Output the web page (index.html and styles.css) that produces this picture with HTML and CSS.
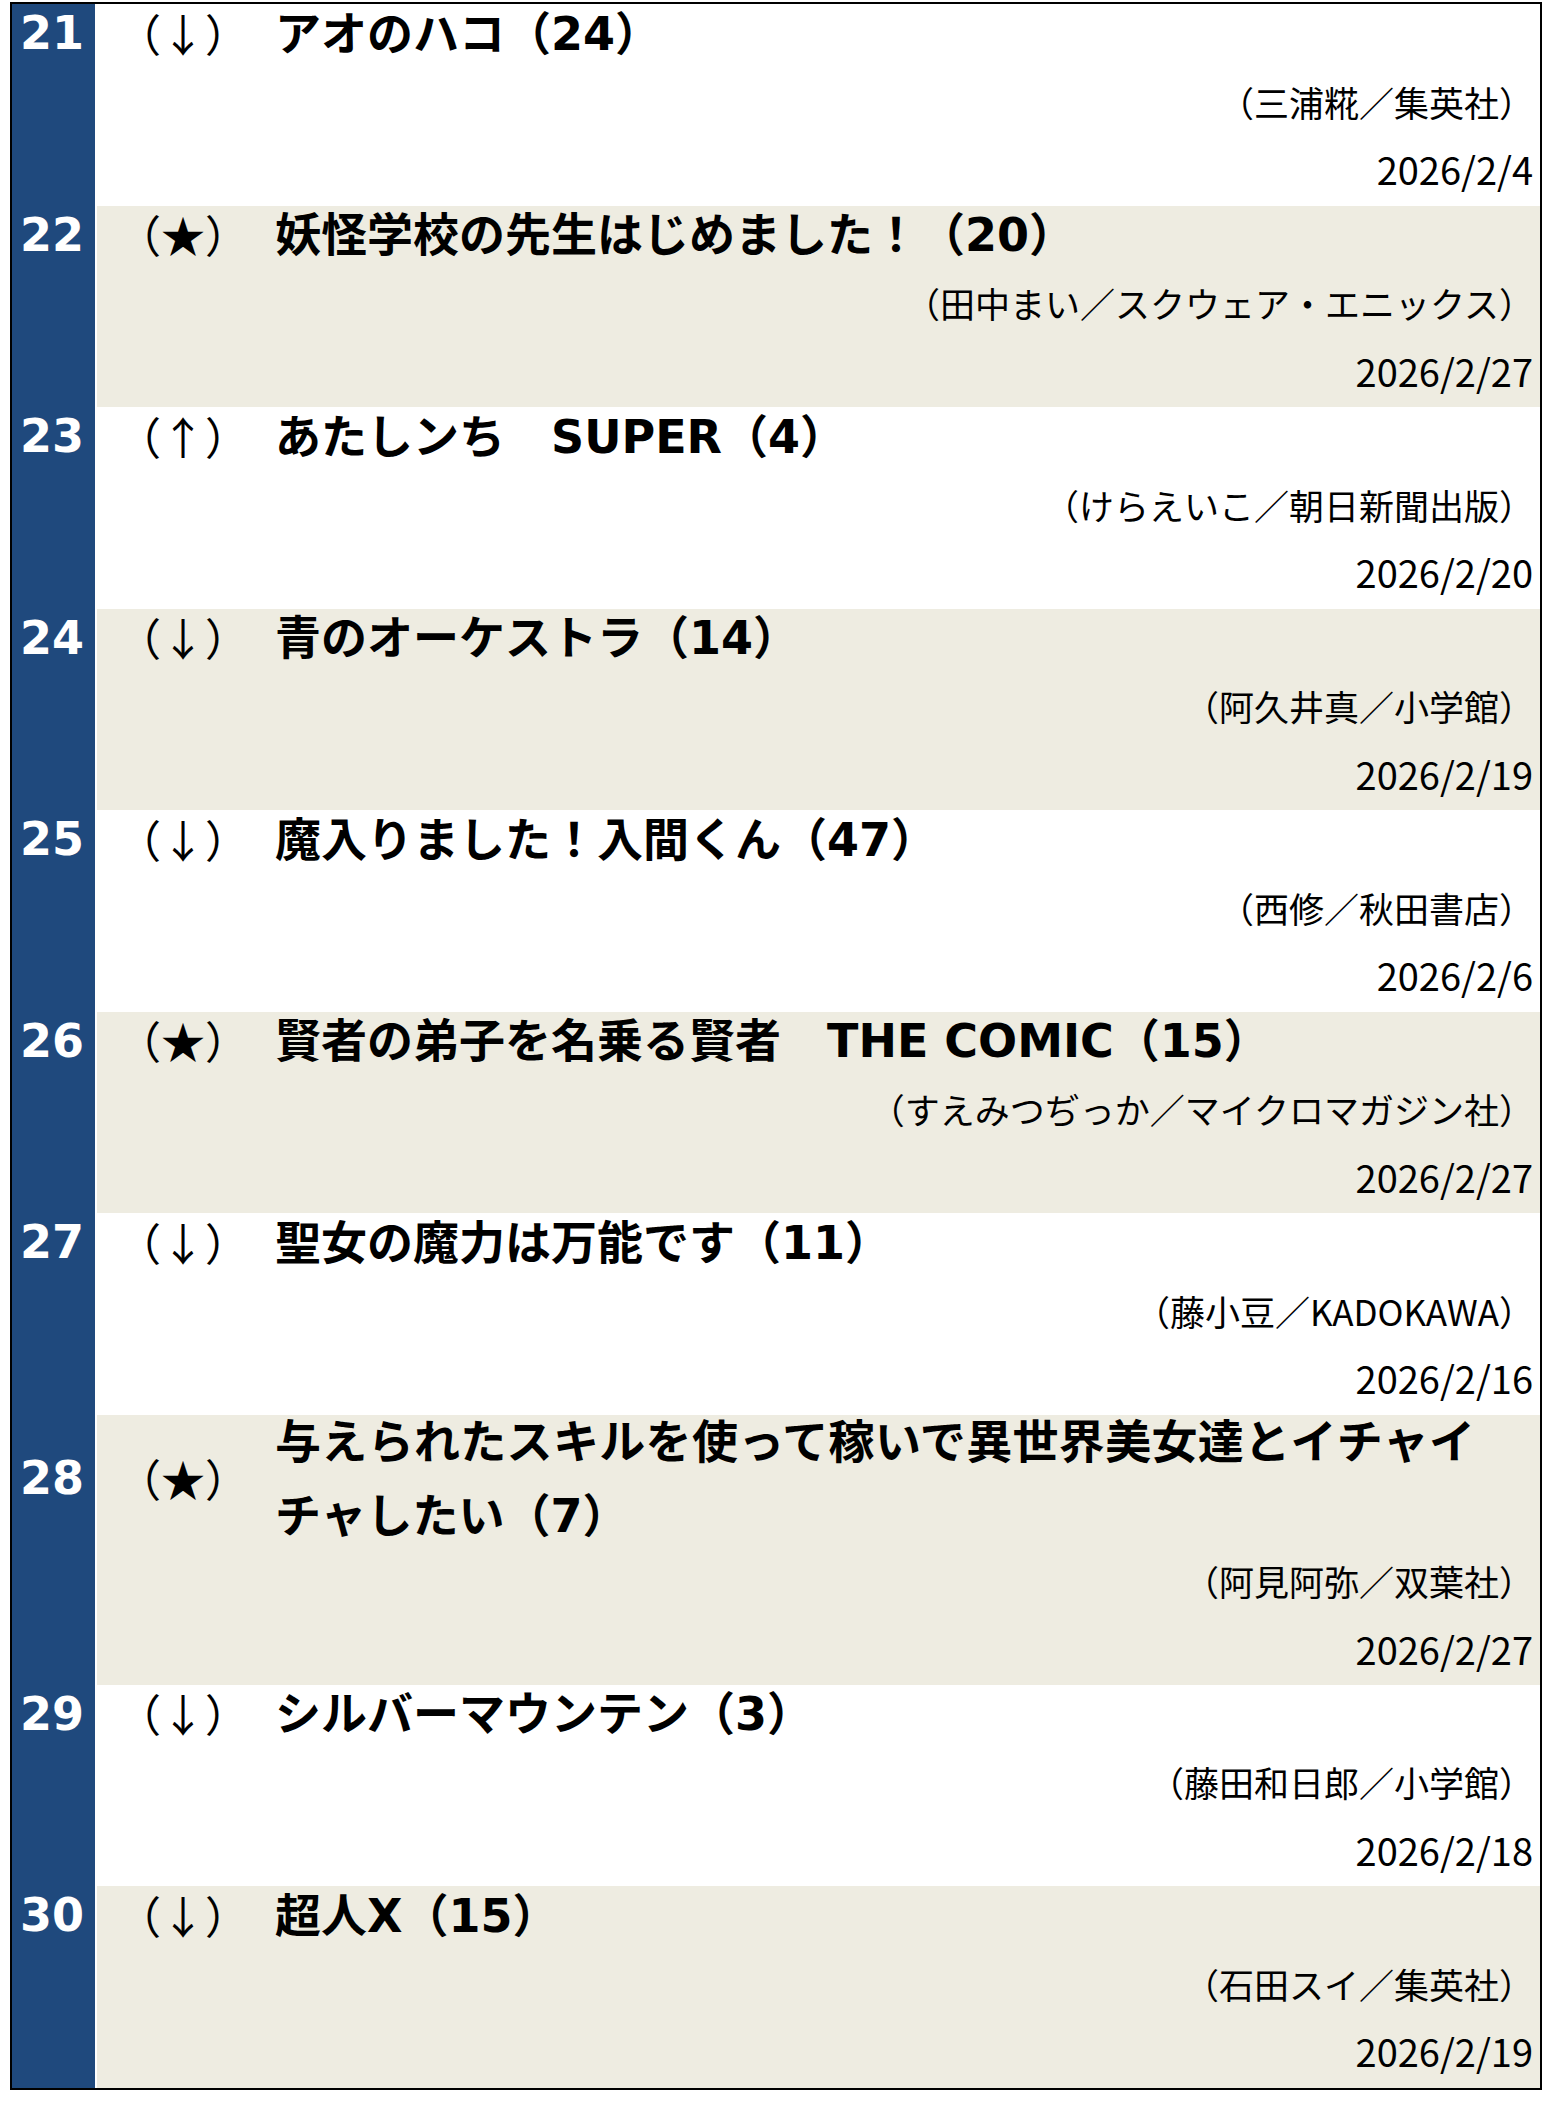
FILE: index.html
```html
<!DOCTYPE html>
<html lang="ja">
<head>
    <meta charset="UTF-8">
    <meta name="viewport" content="width=device-width, initial-scale=1.0">
    <title>コミック ランキング 21〜30位</title>
    <link rel="stylesheet" href="styles.css">
</head>
<body>
    <div class="ranking">
        <div class="entry">
            <div class="rank">21</div>
            <div class="move">（↓）</div>
            <div class="title">アオのハコ（24）</div>
            <div class="author">（三浦糀／集英社）</div>
            <div class="date">2026/2/4</div>
        </div>
        <div class="entry shade">
            <div class="rank">22</div>
            <div class="move">（★）</div>
            <div class="title">妖怪学校の先生はじめました！（20）</div>
            <div class="author">（田中まい／スクウェア・エニックス）</div>
            <div class="date">2026/2/27</div>
        </div>
        <div class="entry">
            <div class="rank">23</div>
            <div class="move">（↑）</div>
            <div class="title">あたしンち　SUPER（4）</div>
            <div class="author">（けらえいこ／朝日新聞出版）</div>
            <div class="date">2026/2/20</div>
        </div>
        <div class="entry shade">
            <div class="rank">24</div>
            <div class="move">（↓）</div>
            <div class="title">青のオーケストラ（14）</div>
            <div class="author">（阿久井真／小学館）</div>
            <div class="date">2026/2/19</div>
        </div>
        <div class="entry">
            <div class="rank">25</div>
            <div class="move">（↓）</div>
            <div class="title">魔入りました！入間くん（47）</div>
            <div class="author">（西修／秋田書店）</div>
            <div class="date">2026/2/6</div>
        </div>
        <div class="entry shade">
            <div class="rank">26</div>
            <div class="move">（★）</div>
            <div class="title">賢者の弟子を名乗る賢者　THE COMIC（15）</div>
            <div class="author">（すえみつぢっか／マイクロマガジン社）</div>
            <div class="date">2026/2/27</div>
        </div>
        <div class="entry">
            <div class="rank">27</div>
            <div class="move">（↓）</div>
            <div class="title">聖女の魔力は万能です（11）</div>
            <div class="author">（藤小豆／KADOKAWA）</div>
            <div class="date">2026/2/16</div>
        </div>
        <div class="entry shade tall">
            <div class="rank">28</div>
            <div class="move">（★）</div>
            <div class="title">与えられたスキルを使って稼いで異世界美女達とイチャイチャしたい（7）</div>
            <div class="author">（阿見阿弥／双葉社）</div>
            <div class="date">2026/2/27</div>
        </div>
        <div class="entry">
            <div class="rank">29</div>
            <div class="move">（↓）</div>
            <div class="title">シルバーマウンテン（3）</div>
            <div class="author">（藤田和日郎／小学館）</div>
            <div class="date">2026/2/18</div>
        </div>
        <div class="entry shade">
            <div class="rank">30</div>
            <div class="move">（↓）</div>
            <div class="title">超人X（15）</div>
            <div class="author">（石田スイ／集英社）</div>
            <div class="date">2026/2/19</div>
        </div>
    </div>
</body>
</html>
```

FILE: styles.css
```css
body {
    margin: 0;
    padding: 2px 0 0 10px;
    background-color: #ffffff;
    color: #000000;
    font-family: "Noto Sans CJK JP", "Noto Sans", sans-serif;
}
.ranking {
    width: 1528px;
    border: 2px solid #000000;
}
.entry {
    display: grid;
    grid-template-columns: 85px 178px 1fr;
    grid-template-rows: 67px 67px 67.5px;
    background: linear-gradient(to right, #1f497d 0 83px, #ffffff 83px 85px, transparent 85px);
    background-color: #ffffff;
}
.entry.shade {
    background-color: #eeece1;
}
.entry.tall {
    grid-template-rows: 136px 67px 67px;
}
.rank {
    grid-row: 1;
    grid-column: 1;
    align-self: center;
    margin-bottom: 9px;
    padding-left: 8px;
    color: #ffffff;
    font-family: "DejaVu Sans", sans-serif;
    font-size: 46px;
    font-weight: bold;
    line-height: 1;
}
.move {
    grid-row: 1;
    grid-column: 2;
    align-self: center;
    margin-bottom: 10px;
    padding-left: 20px;
    font-size: 44px;
    line-height: 1;
}
.title {
    grid-row: 1;
    grid-column: 3;
    align-self: center;
    margin-bottom: 8px;
    padding-right: 65px;
    font-family: "DejaVu Sans", "Noto Sans CJK JP", sans-serif;
    font-size: 46px;
    font-weight: bold;
    line-height: 74px;
    text-align: justify;
    line-break: strict;
}
.author {
    grid-row: 2;
    grid-column: 2 / 4;
    align-self: center;
    margin-bottom: 7px;
    padding-right: 6px;
    text-align: right;
    font-size: 35px;
    line-height: 1;
}
.date {
    grid-row: 3;
    grid-column: 2 / 4;
    align-self: center;
    margin-bottom: 5px;
    padding-right: 7px;
    text-align: right;
    font-size: 38px;
    line-height: 1;
}
```
